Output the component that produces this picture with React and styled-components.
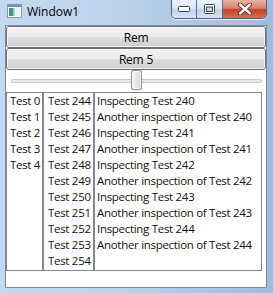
import React from 'react';
import styled, { createGlobalStyle } from 'styled-components';

const GlobalStyle = createGlobalStyle`
    html, body {
        margin: 0;
        padding: 0;
        background: #bcd3ec;
    }
`

const WindowFrame = styled.div`
    width: 273px;
    height: 293px;
    box-sizing: border-box;
    padding: 0 6px 5px 5px;
    display: flex;
    flex-direction: column;
    background: linear-gradient(90deg, #c4d9f0 0%, #bcd2ec 45%, #a9c3e2 80%, #9fbbdc 100%);
    font-family: "Open Sans", "Noto Sans", sans-serif;
    overflow: hidden;
`

const TitleBar = styled.div`
    height: 25px;
    display: flex;
    align-items: flex-start;
`

const TitleIcon = styled.svg`
    width: 15px;
    height: 14px;
    margin: 4px 0 0 2px;
`

const TitleText = styled.div`
    font-size: 12px;
    line-height: 14px;
    margin: 5px 0 0 5px;
    color: #000;
    flex: 1;
`

const CaptionButtons = styled.div`
    display: flex;
    height: 18px;
    border: 1px solid #4f6180;
    border-top: none;
    border-radius: 0 0 5px 5px;
    overflow: hidden;
    box-shadow: 0 1px 0 rgba(255, 255, 255, 0.7);
`

const CaptionButton = styled.div`
    width: ${p => p.width}px;
    height: 100%;
    display: flex;
    align-items: center;
    justify-content: center;
    border-left: ${p => (p.first ? 'none' : '1px solid #5b6d8c')};
    background: ${p => p.close
        ? 'linear-gradient(180deg, #e8b2a4 0%, #d8826c 45%, #c5432a 55%, #d46e55 100%)'
        : 'linear-gradient(180deg, #edf3fb 0%, #d9e5f4 45%, #c2d4ea 55%, #d4e2f3 100%)'};
`

const Client = styled.div`
    flex: 1;
    background: #fff;
    border: 1px solid #7a8a9f;
    display: flex;
    flex-direction: column;
`

const PushButton = styled.div`
    height: 22px;
    box-sizing: border-box;
    border: 1px solid #707070;
    border-radius: 3px;
    background: linear-gradient(180deg, #f2f2f2 0%, #ebebeb 50%, #dddddd 50%, #cfcfcf 100%);
    box-shadow: inset 0 0 0 1px rgba(255, 255, 255, 0.75);
    display: flex;
    align-items: center;
    justify-content: center;
    font-size: 12px;
    letter-spacing: -0.2px;
    color: #000;
`

const SliderRow = styled.div`
    height: 22px;
    position: relative;
    display: flex;
    align-items: center;
    padding: 0 4px 0 5px;
`

const SliderTrack = styled.div`
    flex: 1;
    height: 2px;
    border: 1px solid #c9c9c9;
    border-radius: 1px;
    background: #e7eaea;
`

const SliderThumb = styled.div`
    position: absolute;
    left: 125px;
    top: 0;
    width: 11px;
    height: 20px;
    box-sizing: border-box;
    border: 1px solid #8c8c8c;
    border-radius: 2px;
    background: linear-gradient(90deg, #f6f6f6 0%, #e6e6e6 50%, #d6d6d6 100%);
    box-shadow: inset 0 0 0 1px rgba(255, 255, 255, 0.8);
`

const ListsRow = styled.div`
    display: grid;
    grid-template-columns: 37px 51px 168px;
    height: 179px;
`

const ListColumn = styled.div`
    border: 1px solid #828790;
    overflow: hidden;
`

const ListItem = styled.div`
    height: 16px;
    line-height: 16px;
    font-size: 11.5px;
    letter-spacing: -0.3px;
    padding-left: ${p => p.pad}px;
    white-space: nowrap;
    color: #111;
`

const BottomSpace = styled.div`
    flex: 1;
`

const names = [0, 1, 2, 3, 4].map(n => `Test ${n}`)
const tests = Array.from({ length: 11 }, (_, i) => `Test ${244 + i}`)
const inspections = [240, 241, 242, 243, 244].flatMap(n => [
    `Inspecting Test ${n}`,
    `Another inspection of Test ${n}`,
])

const App = () => {
    return (
        <>
            <GlobalStyle />
            <WindowFrame>
                <TitleBar>
                    <TitleIcon viewBox="0 0 15 14">
                        <rect x="0.5" y="0.5" width="14" height="13" fill="#fff" stroke="#8a99ad" />
                        <rect x="1" y="1" width="13" height="2" fill="#6f8fbf" />
                        <rect x="2" y="4" width="4" height="8" fill="#3d9a7a" />
                        <rect x="6" y="4" width="2" height="8" fill="#9bc7e6" />
                        <rect x="9" y="4" width="4" height="8" fill="#eef2f6" />
                    </TitleIcon>
                    <TitleText>Window1</TitleText>
                    <CaptionButtons>
                        <CaptionButton first width={24}>
                            <svg width="12" height="6" viewBox="0 0 12 6">
                                <rect x="0.5" y="0.5" width="11" height="5" rx="1" fill="#fff" stroke="#33445f" />
                            </svg>
                        </CaptionButton>
                        <CaptionButton width={25}>
                            <svg width="11" height="10" viewBox="0 0 11 10">
                                <rect x="0.5" y="0.5" width="10" height="9" rx="1" fill="#fff" stroke="#33445f" />
                                <rect x="2.5" y="3" width="6" height="4.5" fill="#c8d6e8" stroke="#33445f" />
                            </svg>
                        </CaptionButton>
                        <CaptionButton close width={43}>
                            <svg width="14" height="12" viewBox="0 0 14 12">
                                <path d="M2 1.5 L12 10.5 M12 1.5 L2 10.5" stroke="#5a1e14" strokeWidth="4.2" strokeLinecap="round" />
                                <path d="M2 1.5 L12 10.5 M12 1.5 L2 10.5" stroke="#fff" strokeWidth="2.4" strokeLinecap="round" />
                            </svg>
                        </CaptionButton>
                    </CaptionButtons>
                </TitleBar>
                <Client>
                    <PushButton>Rem</PushButton>
                    <PushButton>Rem 5</PushButton>
                    <SliderRow>
                        <SliderTrack />
                        <SliderThumb />
                    </SliderRow>
                    <ListsRow>
                        <ListColumn>
                            {names.map(t => <ListItem key={t} pad={3}>{t}</ListItem>)}
                        </ListColumn>
                        <ListColumn>
                            {tests.map(t => <ListItem key={t} pad={4}>{t}</ListItem>)}
                        </ListColumn>
                        <ListColumn>
                            {inspections.map(t => <ListItem key={t} pad={2}>{t}</ListItem>)}
                        </ListColumn>
                    </ListsRow>
                    <BottomSpace />
                </Client>
            </WindowFrame>
        </>
    )
}

export default App;
